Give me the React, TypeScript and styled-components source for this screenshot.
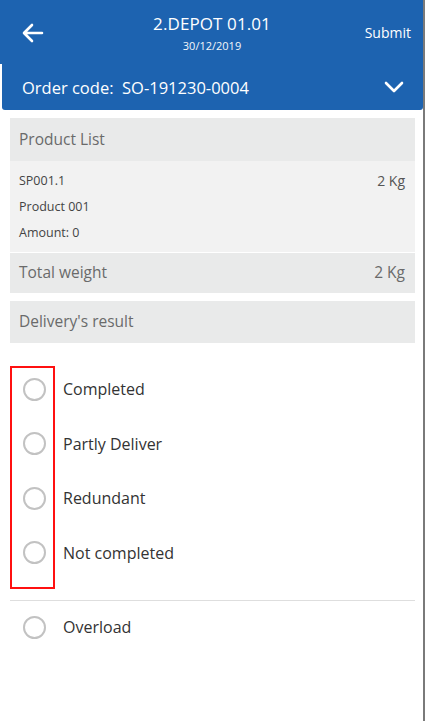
import React from "react";
import styled, { createGlobalStyle } from "styled-components";

const Global = createGlobalStyle`
  html, body { margin: 0; padding: 0; background: #fff; }
  body { font-family: "Open Sans", "Liberation Sans", sans-serif; }
  * { box-sizing: border-box; }
`;

const Screen = styled.div`
  width: 425px;
  height: 721px;
  display: flex;
  background: #fff;
`;

const Main = styled.div`
  flex: 1;
  display: flex;
  flex-direction: column;
  overflow: hidden;
`;

const EdgeLine = styled.div`
  width: 2px;
  background: #7a7a7a;
`;

const Header = styled.div`
  height: 64px;
  background: #1d63b0;
  display: grid;
  grid-template-columns: 60px 1fr 60px;
  align-items: center;
  color: #fff;
  margin-right: -1px;
`;

const BackButton = styled.div`
  display: flex;
  align-items: center;
  padding-left: 22px;
  padding-top: 1px;
`;

const TitleBlock = styled.div`
  display: flex;
  flex-direction: column;
  align-items: center;
  padding-top: 1px;
`;

const Title = styled.div`
  font-size: 17px;
  line-height: 22px;
  letter-spacing: 0.1px;
`;

const SubTitle = styled.div`
  font-size: 11px;
  line-height: 14px;
  margin-top: 4px;
  opacity: 0.95;
`;

const Submit = styled.div`
  font-size: 14px;
  justify-self: end;
  padding-right: 13px;
  padding-top: 0px;
`;

const OrderBar = styled.div`
  height: 46px;
  margin: 0 0 0 2px;
  background: #1d63b0;
  border-radius: 0 0 3px 3px;
  display: flex;
  align-items: center;
  justify-content: space-between;
  padding: 0 19px 0 20px;
  color: #fff;
  font-size: 16.5px;
`;

const Content = styled.div`
  padding: 8px 8px 0 10px;
  display: flex;
  flex-direction: column;
`;

const SectionHead = styled.div<{ $mt?: number; $h?: number }>`
  background: #e9eaea;
  height: ${(p) => p.$h ?? 43}px;
  display: flex;
  align-items: center;
  justify-content: space-between;
  padding: 0 10px 2px 9px;
  color: #6a6a6a;
  font-size: 15.5px;
  margin-top: ${(p) => p.$mt ?? 0}px;
`;

const Items = styled.div`
  background: #f2f2f2;
  height: 91px;
  padding: 6px 10px 0 9px;
  display: flex;
  flex-direction: column;
  margin-bottom: 1px;
`;

const ItemRow = styled.div`
  display: flex;
  justify-content: space-between;
  height: 26px;
  align-items: center;
  font-size: 12.5px;
  color: #444;
`;

const Weight = styled.span`
  font-size: 14px;
  color: #555;
`;

const Options = styled.div`
  display: flex;
  flex-direction: column;
  margin-top: 23px;
`;

const Highlight = styled.div`
  border: 2px solid #ff1010;
  width: 45px;
  padding: 3px 0 16.5px;
  display: flex;
  flex-direction: column;
  gap: 18.5px;
`;

const OptionRow = styled.div`
  display: flex;
  align-items: center;
  height: 36px;
  position: relative;
`;

const Radio = styled.div`
  width: 23px;
  height: 23px;
  border-radius: 50%;
  border: 2.6px solid #c2c2c2;
  margin-left: 11px;
  flex-shrink: 0;
`;

const Label = styled.span`
  position: absolute;
  left: 51px;
  white-space: nowrap;
  font-size: 16px;
  color: #333;
`;

const Divider = styled.div`
  height: 1px;
  background: #dedede;
  margin-top: 11px;
`;

const PlainRow = styled.div`
  display: flex;
  align-items: center;
  height: 36px;
  margin-top: 8px;
  padding-left: 2px;
  gap: 17px;
  font-size: 16px;
  color: #333;
`;

const options = ["Completed", "Partly Deliver", "Redundant", "Not completed"];

export default function App() {
  return (
    <Screen>
      <Global />
      <Main>
        <Header>
          <BackButton>
            <svg width="22" height="20" viewBox="0 0 22 20" fill="none" stroke="#fff" strokeWidth="2.6" strokeLinecap="round" strokeLinejoin="round">
              <path d="M20 10H3M10 2L2 10l8 8" />
            </svg>
          </BackButton>
          <TitleBlock>
            <Title>2.DEPOT 01.01</Title>
            <SubTitle>30/12/2019</SubTitle>
          </TitleBlock>
          <Submit>Submit</Submit>
        </Header>
        <OrderBar>
          <span>Order code:&nbsp; SO-191230-0004</span>
          <svg width="20" height="12" viewBox="0 0 20 12" fill="none" stroke="#fff" strokeWidth="2.6" strokeLinecap="round" strokeLinejoin="round">
            <path d="M2 2l8 8 8-8" />
          </svg>
        </OrderBar>
        <Content>
          <SectionHead>Product List</SectionHead>
          <Items>
            <ItemRow>
              <span>SP001.1</span>
              <Weight>2 Kg</Weight>
            </ItemRow>
            <ItemRow>Product 001</ItemRow>
            <ItemRow>Amount: 0</ItemRow>
          </Items>
          <SectionHead $h={40}>
            <span>Total weight</span>
            <span>2 Kg</span>
          </SectionHead>
          <SectionHead $mt={8} $h={42}>Delivery's result</SectionHead>
          <Options>
            <Highlight>
              {options.map((o) => (
                <OptionRow key={o}>
                  <Radio />
                  <Label>{o}</Label>
                </OptionRow>
              ))}
            </Highlight>
            <Divider />
            <PlainRow>
              <Radio />
              <span>Overload</span>
            </PlainRow>
          </Options>
        </Content>
      </Main>
      <EdgeLine />
    </Screen>
  );
}
